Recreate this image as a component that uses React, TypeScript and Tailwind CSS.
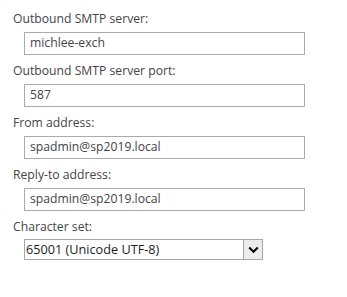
export default function App() {
  const fields: [string, string][] = [
    ["Outbound SMTP server:", "michlee-exch"],
    ["Outbound SMTP server port:", "587"],
    ["From address:", "spadmin@sp2019.local"],
    ["Reply-to address:", "spadmin@sp2019.local"],
  ];
  return (
    <div
      className="w-[347px] h-[297px] bg-white pt-[10px] pl-[13px] text-[12.2px] text-[#444444]"
      style={{ fontFamily: '"Open Sans", "Noto Sans", sans-serif' }}
    >
      <div className="flex flex-col gap-[7px]">
        {fields.map(([label, value]) => (
          <div key={label} className="flex flex-col gap-[4px]">
            <div className="h-[18px] leading-[18px] whitespace-nowrap">{label}</div>
            <div className="ml-[11px] w-[281px] h-[23px] border border-[#ababab] pl-[5px] flex items-center leading-none whitespace-nowrap">
              {value}
            </div>
          </div>
        ))}
        <div className="flex flex-col gap-[3px]">
          <div className="h-[18px] leading-[18px] whitespace-nowrap">Character set:</div>
          <div className="ml-[11px] w-[239px] h-[21px] border border-[#a6a6a6] flex">
            <div className="flex-1 pl-[1px] flex items-center text-[12.7px] text-[#222222] leading-none whitespace-nowrap">
              65001 (Unicode UTF-8)
            </div>
            <div className="w-[19px] border-l border-[#a6a6a6] bg-[#ececec] flex items-center justify-center">
              <svg width="11" height="8" viewBox="0 0 11 8">
                <path d="M1.2 1.5 L5.5 5.8 L9.8 1.5" fill="none" stroke="#000" strokeWidth="2" />
              </svg>
            </div>
          </div>
        </div>
      </div>
    </div>
  );
}
